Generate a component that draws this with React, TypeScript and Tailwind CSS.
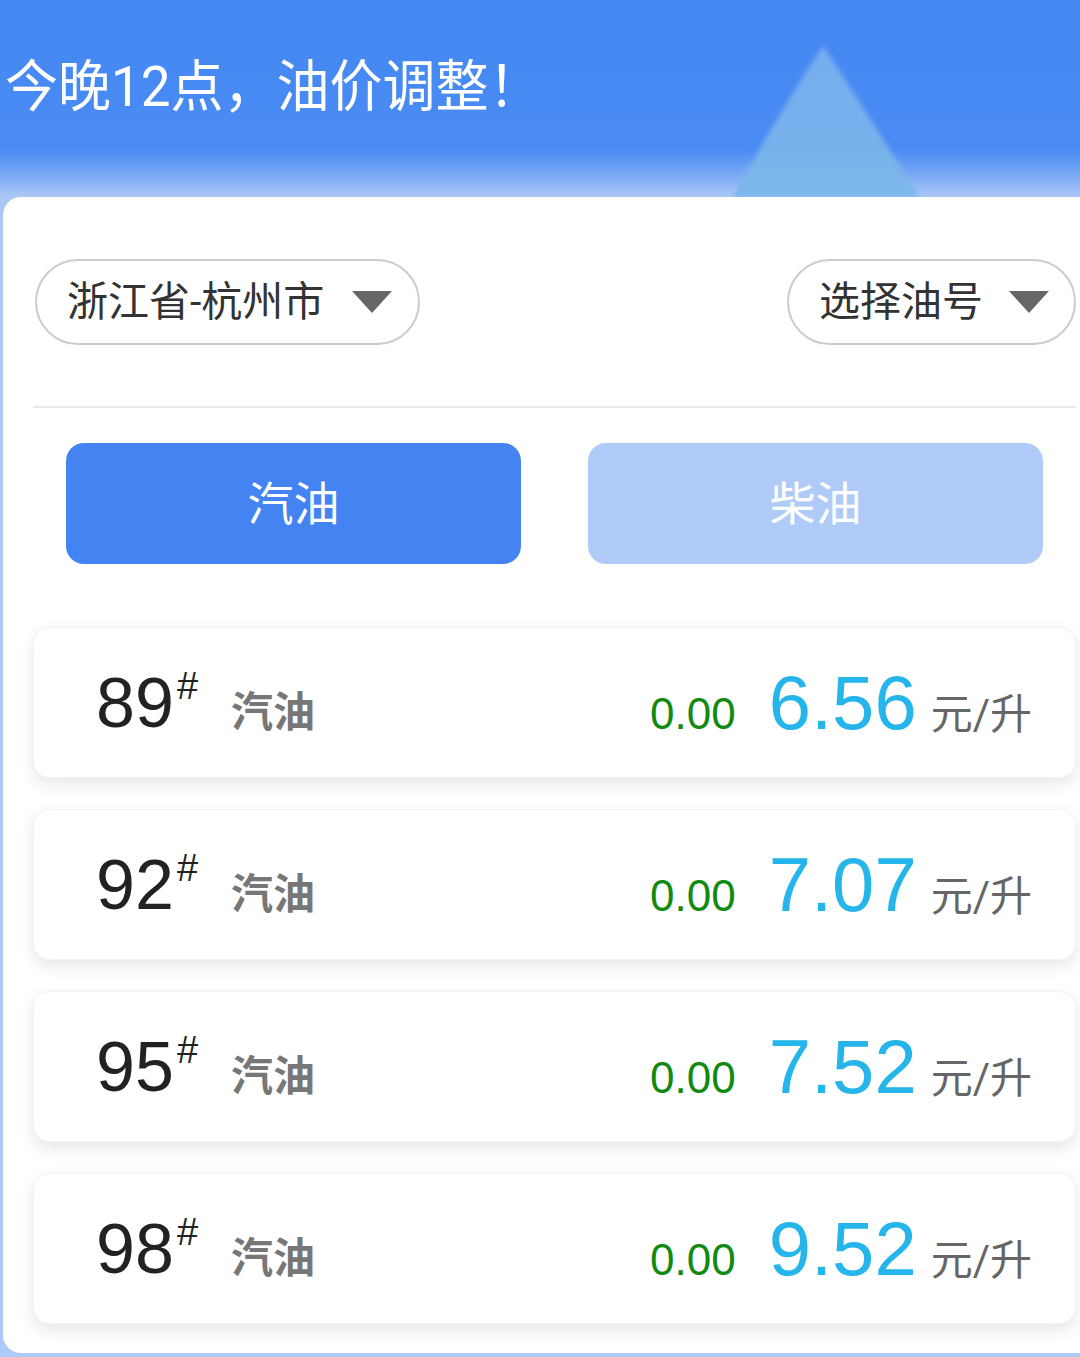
import { useState } from 'react';

const FONT = { fontFamily: '"Roboto", "Noto Sans CJK SC", sans-serif' };
const NUM = { fontFamily: '"Liberation Sans", "Roboto", sans-serif' };

const prices = [
    { grade: '89', change: '0.00', price: '6.56' },
    { grade: '92', change: '0.00', price: '7.07' },
    { grade: '95', change: '0.00', price: '7.52' },
    { grade: '98', change: '0.00', price: '9.52' },
];

function Caret() {
    return (
        <svg width="40" height="24" viewBox="0 0 40 24" className="shrink-0">
            <polygon points="0,1 40,1 20,23" fill="#666666" />
        </svg>
    );
}

function Dropdown({ label, className }: { label: string; className: string }) {
    return (
        <button
            className={`flex h-[86px] items-center rounded-full border-2 border-[#cccccc] bg-white text-[41px] leading-none text-[#333333] ${className}`}
        >
            <span>{label}</span>
            <Caret />
        </button>
    );
}

function PriceCard({ grade, change, price }: { grade: string; change: string; price: string }) {
    return (
        <div className="flex h-[151px] items-center justify-between rounded-[16px] border border-[#f3f3f3] bg-white pl-[62px] pr-[43px] shadow-[0_6px_16px_rgba(0,0,0,0.1)]">
            <div className="flex items-baseline">
                <span className="text-[70px] leading-none text-[#222222]" style={NUM}>
                    {grade}
                </span>
                <span className="relative -top-[28px] ml-[3px] text-[38px] leading-none text-[#222222]" style={NUM}>
                    #
                </span>
                <span className="ml-[33px] text-[42px] font-semibold leading-none text-[#777777]">汽油</span>
            </div>
            <div className="flex items-baseline">
                <span className="text-[44px] leading-none text-[#128a12]" style={NUM}>
                    {change}
                </span>
                <span className="ml-[33px] text-[76px] leading-none text-[#25b5ea]" style={NUM}>
                    {price}
                </span>
                <span className="ml-[14px] text-[42px] leading-none text-[#666666]">元/升</span>
            </div>
        </div>
    );
}

export default function App() {
    const [tab, setTab] = useState<'gas' | 'diesel'>('gas');

    return (
        <div
            className="relative h-[1357px] w-[1080px] overflow-hidden bg-[linear-gradient(180deg,#4587f3_0px,#4a8cf3_150px,#80acf4_178px,#abc7f6_196px,#aecaf8_100%)]"
            style={FONT}
        >
            {/* decorative cone */}
            <svg
                className="absolute left-[722px] top-[38px]"
                width="210"
                height="170"
                viewBox="0 0 210 170"
            >
                <defs>
                    <filter id="soft" x="-20%" y="-20%" width="140%" height="140%">
                        <feGaussianBlur stdDeviation="2.5" />
                    </filter>
                    <linearGradient id="cone" x1="0" y1="0" x2="0" y2="1">
                        <stop offset="0" stopColor="#7fb4ee" stopOpacity="0.85" />
                        <stop offset="1" stopColor="#7ab6ea" stopOpacity="0.95" />
                    </linearGradient>
                </defs>
                <path d="M101 8 Q 60 70 10 160 L 198 160 Q 142 70 101 8 Z" fill="url(#cone)" filter="url(#soft)" />
            </svg>

            {/* header */}
            <div className="relative flex h-[197px] items-start pl-[5px] pt-[61px]">
                <h1 className="origin-left scale-y-[1.06] text-[53px] font-normal leading-none text-white">
                    今晚12点，油价调整！
                </h1>
            </div>

            {/* panel */}
            <div className="relative ml-[3px] h-[1156px] rounded-l-[18px] bg-white pl-[30px] pr-[4px] pt-[62px]">
                <div className="flex items-center justify-between">
                    <Dropdown label="浙江省-杭州市" className="ml-[2px] w-[385px] gap-[28px] pl-[30px]" />
                    <Dropdown label="选择油号" className="w-[289px] gap-[26px] pl-[30px]" />
                </div>

                <div className="mt-[61px] h-[2px] bg-[#e8e8e8]" />

                <div className="mt-[35px] flex gap-[67px] px-[33px]">
                    <button
                        onClick={() => setTab('gas')}
                        className={`h-[121px] w-[455px] rounded-[18px] text-[46px] leading-none text-white ${
                            tab === 'gas' ? 'bg-[#4384f2]' : 'bg-[#b0cbf8]'
                        }`}
                    >
                        汽油
                    </button>
                    <button
                        onClick={() => setTab('diesel')}
                        className={`h-[121px] w-[455px] rounded-[18px] text-[46px] leading-none text-white ${
                            tab === 'diesel' ? 'bg-[#4384f2]' : 'bg-[#b0cbf8]'
                        }`}
                    >
                        柴油
                    </button>
                </div>

                <div className="mt-[63px] flex flex-col gap-[31px]">
                    {prices.map((p) => (
                        <PriceCard key={p.grade} {...p} />
                    ))}
                </div>
            </div>
        </div>
    );
}
